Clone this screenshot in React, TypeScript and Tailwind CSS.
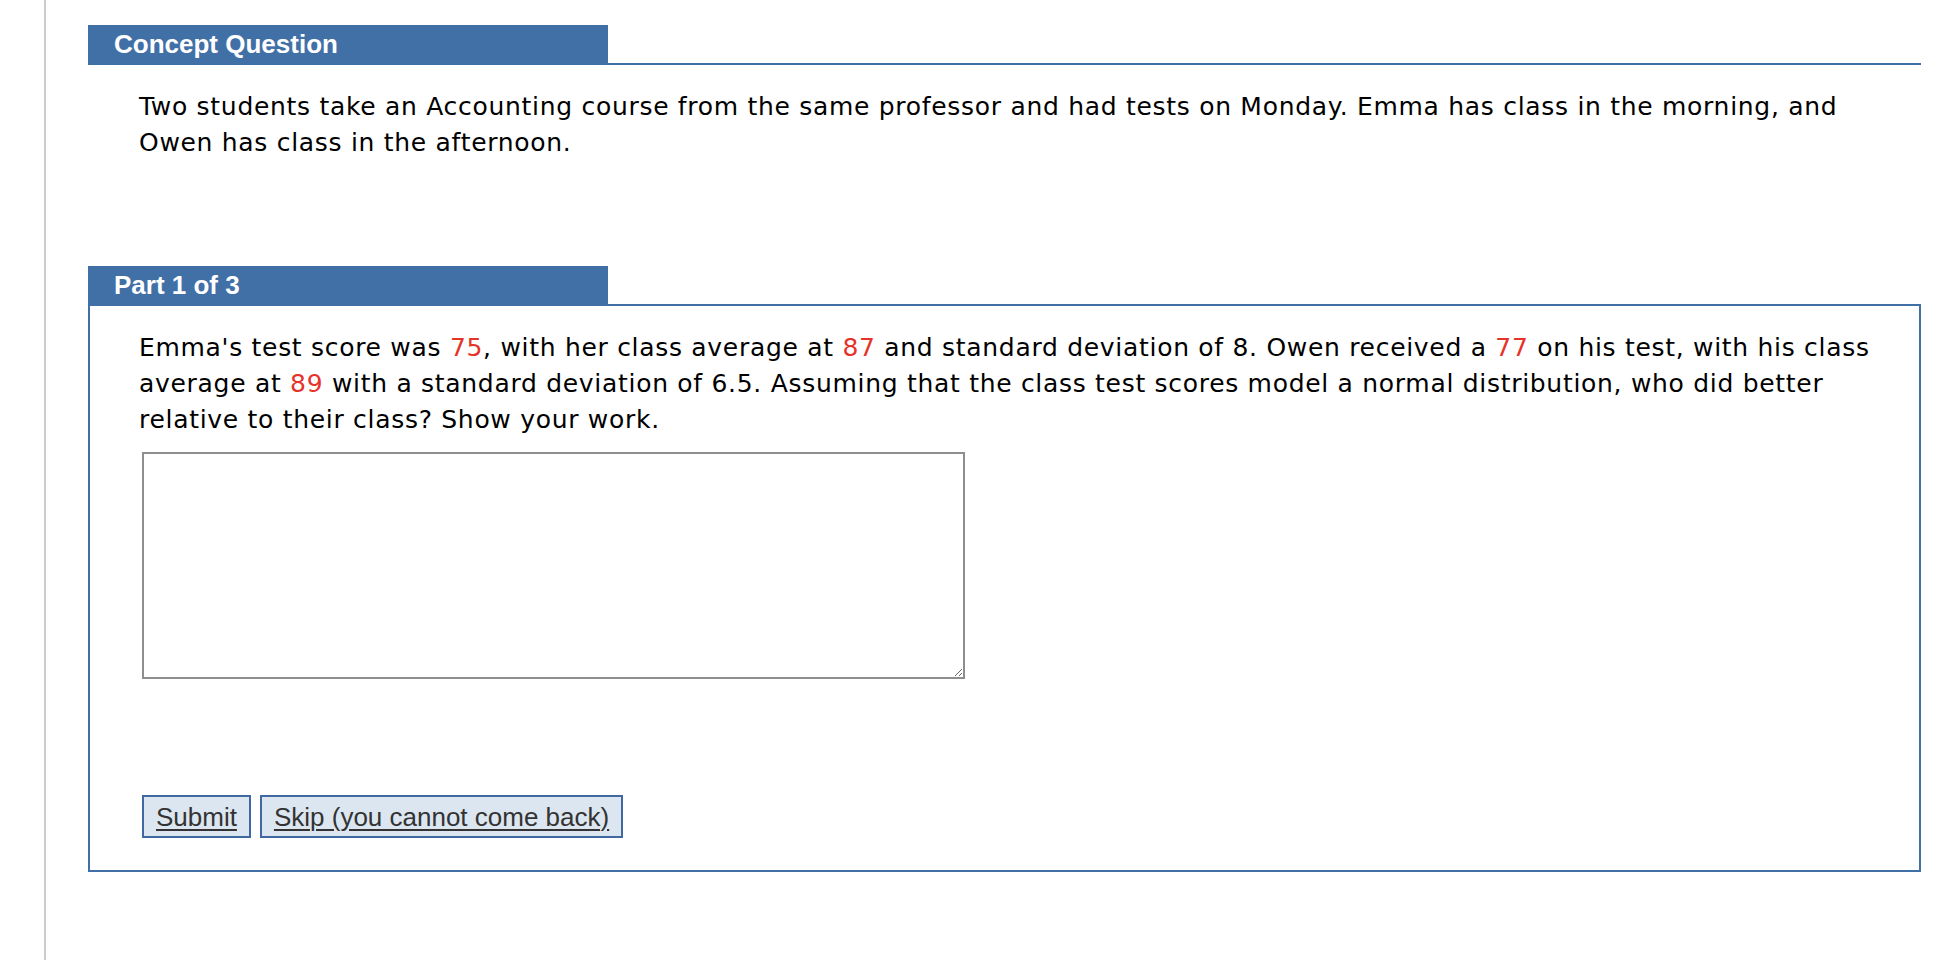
import React from "react";

function SectionTab({ title }: { title: string }) {
  return (
    <div className="w-[520px] h-[38px] bg-[#4170a7] flex items-center pl-[26px]">
      <span className="text-white font-bold text-[26px] font-['Liberation_Sans',Arial,sans-serif]">
        {title}
      </span>
    </div>
  );
}

function Num({ children }: { children: React.ReactNode }) {
  return <span className="text-[#e6332a]">{children}</span>;
}

const bodyText =
  "text-[25px] leading-[36px] tracking-[0.7px] text-black font-['DejaVu_Sans',Verdana,sans-serif]";

const btn =
  "h-[43px] px-[12px] border-2 border-[#4169a1] bg-[#dce6f0] text-[#333333] text-[26px] leading-none underline underline-offset-[3px] decoration-2";

export default function App() {
  return (
    <div className="flex min-h-screen bg-white">
      {/* left gutter rule */}
      <div className="w-[44px] shrink-0" />
      <div className="border-l-2 border-[#cccccc] min-h-screen pl-[42px] pr-[29px] pt-[25px] flex-1">
        {/* Concept Question */}
        <div className="border-b-2 border-[#4170a7]">
          <SectionTab title="Concept Question" />
        </div>
        <div className={`pl-[51px] pr-[30px] pt-[24px] ${bodyText}`}>
          Two students take an Accounting course from the same professor and had tests on Monday. Emma has class in the morning, and Owen has class in the afternoon.
        </div>

        {/* Part 1 of 3 */}
        <div className="mt-[105px]">
          <SectionTab title="Part 1 of 3" />
          <div className="border-2 border-[#4170a7] pt-[24px] pl-[49px] pr-[30px] pb-[32px]">
            <p className={bodyText}>
              Emma's test score was <Num>75</Num>, with her class average at <Num>87</Num> and standard deviation of 8. Owen received a <Num>77</Num> on his test, with his class average at <Num>89</Num> with a standard deviation of 6.5. Assuming that the class test scores model a normal distribution, who did better relative to their class? Show your work.
            </p>
            <textarea
              className="block mt-[14px] ml-[3px] w-[823px] h-[227px] border-2 border-[#8e8e8e] bg-white outline-none"
              aria-label="answer"
            />
            <div className="flex gap-[9px] mt-[116px] ml-[3px] font-['Liberation_Sans',Arial,sans-serif]">
              <button className={btn}>Submit</button>
              <button className={btn}>Skip (you cannot come back)</button>
            </div>
          </div>
        </div>
      </div>
    </div>
  );
}
